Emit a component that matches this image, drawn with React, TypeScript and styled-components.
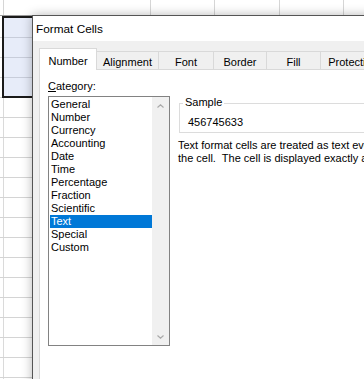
import React from "react";
import styled, { createGlobalStyle } from "styled-components";

const FONT = `"Liberation Sans", Arial, sans-serif`;

const GlobalStyle = createGlobalStyle`
  html, body { margin: 0; padding: 0; background: #fff; overflow: hidden; }
  body { font-family: ${FONT}; }
`;

const Screen = styled.div`
  position: relative;
  width: 364px;
  height: 379px;
  overflow: hidden;
  background: #fff;
  font-family: ${FONT};
  font-size: 11px;
  color: #000;
`;

/* ---------- spreadsheet behind the dialog ---------- */
const Sheet = styled.div`
  display: flex;
  flex-direction: column;
`;

const HeaderRow = styled.div`
  display: flex;
  height: 16px;
  box-sizing: border-box;
  border-bottom: 1px solid #9a9a9a;
`;

const HeaderCell = styled.div<{ $w: number }>`
  flex: 0 0 ${(p) => p.$w}px;
  box-sizing: border-box;
  border-right: 1px solid #d6d6d6;
`;

const GridBody = styled.div`
  display: flex;
  flex-direction: column;
  padding-top: 2px;
`;

const GridRow = styled.div`
  display: flex;
  height: 20px;
  box-sizing: border-box;
  border-bottom: 1px solid #d4d4d4;
`;

const GridCell = styled.div<{ $w: number }>`
  flex: 0 0 ${(p) => p.$w}px;
  box-sizing: border-box;
  border-right: 1px solid #dadada;
`;

const Selection = styled.div`
  position: absolute;
  left: 2px;
  top: 16px;
  width: 40px;
  height: 82px;
  box-sizing: border-box;
  border: 2px solid #1a1a1a;
  background: rgba(170, 188, 235, 0.28);
`;

/* ---------- dialog ---------- */
const Dialog = styled.div`
  position: absolute;
  left: 32px;
  top: 15px;
  width: 430px;
  height: 420px;
  box-sizing: border-box;
  border: 1px solid #555;
  background: #f0f0f0;
  box-shadow: 0 0 10px rgba(0, 0, 0, 0.28);
  display: flex;
  flex-direction: column;
`;

const TitleBar = styled.div`
  height: 25px;
  flex: 0 0 25px;
  background: #fff;
  display: flex;
  align-items: center;
  padding-left: 3px;
  font-size: 11.8px;
`;

const DialogBody = styled.div`
  flex: 1;
  display: flex;
  flex-direction: column;
  padding: 7px 0 0 6px;
`;

const TabStrip = styled.div`
  display: flex;
  align-items: flex-end;
  height: 21px;
  position: relative;
  z-index: 2;
`;

const Tab = styled.div<{ $w: number; $active?: boolean; $first?: boolean }>`
  flex: 0 0 ${(p) => p.$w}px;
  box-sizing: border-box;
  height: ${(p) => (p.$active ? 22 : 18)}px;
  margin-left: ${(p) => (p.$first ? 0 : -1)}px;
  margin-bottom: ${(p) => (p.$active ? -1 : 0)}px;
  border: 1px solid #d9d9d9;
  border-bottom: none;
  background: ${(p) => (p.$active ? "#fff" : "#f0f0f0")};
  text-align: center;
  line-height: 13px;
  padding-top: ${(p) => (p.$active ? 6 : 4)}px;
  white-space: nowrap;
  overflow: hidden;
  position: relative;
  z-index: ${(p) => (p.$active ? 2 : 1)};
`;

const TabPage = styled.div`
  flex: 1;
  display: flex;
  gap: 9px;
  background: #fff;
  border: 1px solid #d9d9d9;
  padding: 10px 0 0 8px;
`;

const LeftColumn = styled.div`
  flex: 0 0 122px;
  display: flex;
  flex-direction: column;
`;

const Label = styled.div`
  line-height: 13px;
  height: 13px;
`;

const ListBox = styled.div`
  margin-top: 3px;
  height: 250px;
  box-sizing: border-box;
  border: 1px solid #828282;
  background: #fff;
  display: flex;
`;

const ItemList = styled.div`
  flex: 1;
  padding: 1px 0 0 1px;
  display: flex;
  flex-direction: column;
`;

const Item = styled.div<{ $selected?: boolean }>`
  height: 13px;
  line-height: 13px;
  padding-left: 1px;
  white-space: nowrap;
  background: ${(p) => (p.$selected ? "#0078d7" : "transparent")};
  color: ${(p) => (p.$selected ? "#fff" : "#000")};
`;

const ScrollBar = styled.div`
  flex: 0 0 17px;
  background: #f0f0f0;
  display: flex;
  flex-direction: column;
  justify-content: space-between;
`;

const ScrollArrow = styled.div`
  height: 17px;
  display: flex;
  align-items: center;
  justify-content: center;
`;

const RightColumn = styled.div`
  flex: 1;
  display: flex;
  flex-direction: column;
`;

const GroupBox = styled.div`
  position: relative;
  margin-top: 23px;
  border: 1px solid #dcdcdc;
  padding: 12px 8px 3px;
  line-height: 13px;
`;

const GroupLegend = styled.span`
  position: absolute;
  top: -8px;
  left: 3px;
  padding: 0 2px;
  background: #fff;
  line-height: 13px;
`;

const Description = styled.div`
  margin-top: 6px;
  margin-left: -1px;
  line-height: 13px;
  white-space: pre;
`;

const Chevron: React.FC<{ dir: "up" | "down" }> = ({ dir }) => (
  <svg width="7" height="4" viewBox="0 0 7 4">
    <path
      d={dir === "up" ? "M0.5 3.5 L3.5 0.8 L6.5 3.5" : "M0.5 0.5 L3.5 3.2 L6.5 0.5"}
      fill="none"
      stroke="#a9a9a9"
      strokeWidth="1.2"
    />
  </svg>
);

const columns = [4, 147, 64, 65, 64, 40];
const tabs = [
  { label: "Number", w: 58 },
  { label: "Alignment", w: 63 },
  { label: "Font", w: 56 },
  { label: "Border", w: 54 },
  { label: "Fill", w: 55 },
  { label: "Protection", w: 66 },
];
const categories = [
  "General",
  "Number",
  "Currency",
  "Accounting",
  "Date",
  "Time",
  "Percentage",
  "Fraction",
  "Scientific",
  "Text",
  "Special",
  "Custom",
];

export default function App() {
  return (
    <Screen>
      <GlobalStyle />
      <Sheet>
        <HeaderRow>
          {columns.map((w, i) => (
            <HeaderCell key={i} $w={w} />
          ))}
        </HeaderRow>
        <GridBody>
          {Array.from({ length: 19 }).map((_, r) => (
            <GridRow key={r}>
              {columns.map((w, i) => (
                <GridCell key={i} $w={w} />
              ))}
            </GridRow>
          ))}
        </GridBody>
      </Sheet>
      <Selection />
      <Dialog>
        <TitleBar>Format Cells</TitleBar>
        <DialogBody>
          <TabStrip>
            {tabs.map((t, i) => (
              <Tab key={t.label} $w={t.w} $active={i === 0} $first={i === 0}>
                {t.label}
              </Tab>
            ))}
          </TabStrip>
          <TabPage>
            <LeftColumn>
              <Label>
                <u>C</u>ategory:
              </Label>
              <ListBox>
                <ItemList>
                  {categories.map((c) => (
                    <Item key={c} $selected={c === "Text"}>
                      {c}
                    </Item>
                  ))}
                </ItemList>
                <ScrollBar>
                  <ScrollArrow>
                    <Chevron dir="up" />
                  </ScrollArrow>
                  <ScrollArrow>
                    <Chevron dir="down" />
                  </ScrollArrow>
                </ScrollBar>
              </ListBox>
            </LeftColumn>
            <RightColumn>
              <GroupBox>
                <GroupLegend>Sample</GroupLegend>
                456745633
              </GroupBox>
              <Description>
                {"Text format cells are treated as text even when a number is in\nthe cell.  The cell is displayed exactly as entered."}
              </Description>
            </RightColumn>
          </TabPage>
        </DialogBody>
      </Dialog>
    </Screen>
  );
}
